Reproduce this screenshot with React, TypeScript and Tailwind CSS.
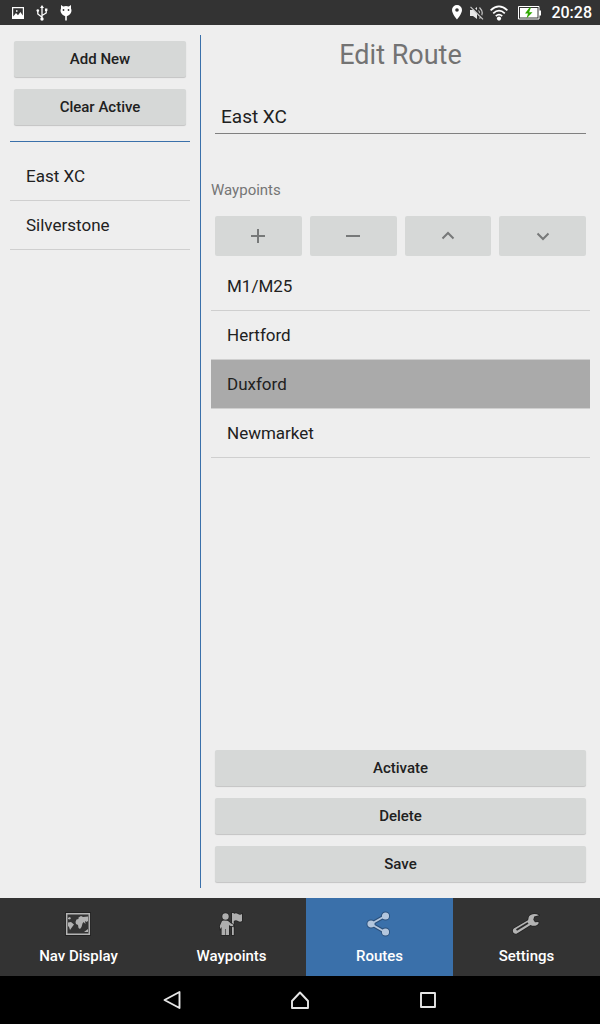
import { useState } from "react";
import type { ReactNode } from "react";

const routes = ["East XC", "Silverstone"];
const waypoints = ["M1/M25", "Hertford", "Duxford", "Newmarket"];

function StatusBar() {
  return (
    <header className="flex h-[25px] items-center justify-between bg-[#333333] pl-3 pr-2 text-white">
      <div className="flex items-center gap-3">
        <svg width="12" height="12" viewBox="0 0 12 12" aria-label="Picture saved">
          <path fillRule="evenodd" fill="currentColor" d="M0 0h12v12H0zM1.2 1.2v8.3L4 6l2 2.2L8.4 5l2.4 3.4V1.2zM4 3.2h1.5v1.5H4z" />
        </svg>
        <svg width="12" height="16" viewBox="0 0 12 16" fill="none" stroke="currentColor" strokeWidth="1.3" aria-label="USB connected">
          <path d="M6 2v12M6 12.2 1.8 9V6M6 10.5 10.2 8V5" />
          <path fill="currentColor" stroke="none" d="M6 0l2 3H4zM9 3.5h2.4v2.4H9z" />
          <circle cx="1.8" cy="5.6" r="1.3" fill="currentColor" stroke="none" />
          <circle cx="6" cy="14" r="1.7" fill="currentColor" stroke="none" />
        </svg>
        <svg width="12" height="16" viewBox="0 0 12 16" aria-label="Debugging">
          <path fill="currentColor" d="M1 0l2.200 1.600Q6 .6 8.800 1.600L11 0v3.500C11.800 5 11.600 7 10.500 8.600 9.500 10.200 8 11 6.800 11.200V15.500H5.200V11.200C4 11 2.500 10.200 1.500 8.600 .4 7 .2 5 1 3.500z" />
          <circle cx="3.500" cy="5" r=".9" fill="#333" />
          <circle cx="8.500" cy="5" r=".9" fill="#333" />
        </svg>
      </div>
      <div className="flex items-center">
        <svg width="10" height="15" viewBox="0 0 10 15" className="mr-2" aria-label="Location">
          <path fillRule="evenodd" fill="currentColor" d="M5 0a5 5 0 0 0-5 5c0 3.700 5 9.500 5 9.500S10 8.700 10 5a5 5 0 0 0-5-5zm0 3.200a1.800 1.800 0 1 1 0 3.600 1.800 1.800 0 0 1 0-3.600z" />
        </svg>
        <svg width="14" height="14" viewBox="0 0 14 14" className="mr-1.5" fill="none" stroke="#c8c8c8" strokeWidth="1.2" aria-label="Muted">
          <path fill="#e8e8e8" stroke="none" d="M0 4h3L7 1v12L3 10H0z" />
          <path d="M8.500 4.500q2 2.500 0 5M9.500 1.500q5.500 5.500 0 11" />
          <path stroke="#333" strokeWidth="2" d="M1.500 0l12 12.500" />
          <path d="M.5 .8l12.500 12.500" />
        </svg>
        <svg width="18" height="16" viewBox="0 0 18 16" className="mr-2.5" fill="none" stroke="currentColor" strokeWidth="1.7" aria-label="Wi-Fi">
          <path d="M.6 5.300Q9-2.500 17.400 5.300M3.200 8.300Q9 2.800 14.800 8.300M5.800 11.200Q9 8 12.200 11.200" />
          <circle cx="9" cy="13.600" r="2.100" fill="currentColor" stroke="none" />
        </svg>
        <svg width="23" height="14" viewBox="0 0 23 14" className="mr-2.5" aria-label="Battery charging">
          <path fill="none" stroke="currentColor" d="M.5 .5h20.500v12.500H.5z" />
          <path fill="currentColor" d="M2 2h17.500v9.500H2zM21 4.500h2v5h-2z" />
          <path fill="#2fa800" d="M11.500 1.500L7 7.500h3l-1.500 5L14.500 6.300h-3.400L13 1.500z" />
        </svg>
        <time className="text-base leading-[25px] font-medium">20:28</time>
      </div>
    </header>
  );
}

function RaisedButton({ children }: { children: ReactNode }) {
  return (
    <button type="button" className="h-9 w-full rounded-xs bg-[#d6d8d7] text-[15px] font-medium text-[#212121] shadow-[0_1px_1px_rgba(0,0,0,0.18)]">
      {children}
    </button>
  );
}

function ToolButton({ label, path }: { label: string; path: string }) {
  return (
    <button type="button" aria-label={label} className="flex h-10 items-center justify-center rounded-xs bg-[#d6d8d7] text-[#777979]">
      <svg width="24" height="24" viewBox="0 0 24 24" fill="none" stroke="currentColor" strokeWidth="2">
        <path d={path} />
      </svg>
    </button>
  );
}

function ListRow({ label, selected = false, onSelect }: { label: string; selected?: boolean; onSelect?: () => void }) {
  return (
    <li className="border-b border-[#cfcfcf]">
      <button
        type="button"
        onClick={onSelect}
        className={`block h-12 w-full px-4 pt-0.5 text-left text-[17px] text-[#212121] ${selected ? "bg-[#aaaaaa]" : ""}`}
      >
        {label}
      </button>
    </li>
  );
}

const MapIcon = (
  <svg width="26" height="24" viewBox="0 0 26 24">
    <path fill="#222" d="M0 0h26v24H0z" />
    <path fill="#343434" d="M2 2h22v20H2z" />
    <path fill="none" stroke="#b3b3b3" strokeWidth="1.500" d="M1.700 1.700h22.600v20.600H1.700z" />
    <path fill="#b3b3b3" d="M3 6l1.500-1L6 6l-1 1.500L3 7zM3 10.500l3-.5 3 2.500-1.500 2L5 18l-1-3-1-1zM10.500 10l1-2.500 2-.5V5.500L16 4l2 1 5-.5V9l-1.500 1-1.500-1 .5 3-2-2-1 1.500L16.500 15l-1.500 2-1.500-1-.5-3-2-1zM23 17v3h-4l2-1.500z" />
  </svg>
);

const PersonIcon = (
  <svg width="24" height="24" viewBox="0 0 24 24" fill="#aeaeae" stroke="#232323" strokeWidth="1.5" paintOrder="stroke">
    <path d="M13 1h1.800v22H13zM14.800 2Q17 .5 19 2T23 2v7q-2 1.300-4 0t-4.200 0z" />
    <path d="M3 9q3-1.500 6 0l3 2.500 2 1v1.800l-2.500-.3L10 13v10H6.800v-6h-.6v6H2.600v-8L1.300 17 .8 14z" />
    <circle cx="6.500" cy="4.500" r="3.200" />
  </svg>
);

const ShareIcon = (
  <svg width="26" height="26" viewBox="0 0 26 26">
    <g fill="#2b507b" stroke="#2b507b" strokeWidth="4">
      <path d="M5 13L19 5M5 13l14 8" />
      <circle cx="5" cy="13" r="2.500" />
      <circle cx="19.500" cy="5" r="2.500" />
      <circle cx="19.500" cy="21" r="2.500" />
    </g>
    <g fill="#b3c6dd" stroke="#b3c6dd" strokeWidth="1.800">
      <path d="M5 13L19 5M5 13l14 8" />
      <circle cx="5" cy="13" r="2.700" />
      <circle cx="19.500" cy="5" r="2.700" />
      <circle cx="19.500" cy="21" r="2.700" />
    </g>
  </svg>
);

const WrenchIcon = (
  <svg width="28" height="22" viewBox="0 0 28 22" fill="none">
    <path
      fill="#b3b3b3"
      stroke="#232323"
      strokeWidth="1.500"
      paintOrder="stroke"
      d="M27 2.200C23.500 .2 18.500 .8 17 3.500c-.7 1.500-.4 2.500-1 3.700L1.800 15.500c-1.800 1.500-1 5 1.800 5.300 1 0 1.700-.5 2.500-1L18.500 12c3 1.500 6.500 1 8-1.500V9l-3.500 .3-1.700-2.500 .9-3.300z"
    />
    <path stroke="#2a2a2a" strokeWidth="2" d="M4.500 17L16 10" />
  </svg>
);

const tabs: { name: string; icon: ReactNode }[] = [
  { name: "Nav Display", icon: MapIcon },
  { name: "Waypoints", icon: PersonIcon },
  { name: "Routes", icon: ShareIcon },
  { name: "Settings", icon: WrenchIcon },
];

function SystemKey({ label, path }: { label: string; path: string }) {
  return (
    <button type="button" aria-label={label} className="flex w-32 items-center justify-center text-[#e6e6e6]">
      <svg width="20" height="20" viewBox="0 0 20 20" fill="none" stroke="currentColor" strokeWidth="1.900" strokeLinejoin="round">
        <path d={path} />
      </svg>
    </button>
  );
}

export default function App() {
  const [selected, setSelected] = useState("Duxford");
  const [name, setName] = useState("East XC");

  return (
    <div className="flex min-h-screen flex-col bg-[#eeeeee] font-['Roboto',sans-serif]">
      <StatusBar />
      <div className="flex grow py-2.5">
        <aside className="w-1/3 px-2.5">
          <div className="flex flex-col gap-3 border-b border-[#3a70aa] px-1 pt-1.5 pb-4">
            <RaisedButton>Add New</RaisedButton>
            <RaisedButton>Clear Active</RaisedButton>
          </div>
          <ul className="pt-2.5">
            {routes.map((route) => (
              <ListRow key={route} label={route} onSelect={() => setName(route)} />
            ))}
          </ul>
        </aside>
        <main className="flex grow flex-col border-l border-[#3a70aa] px-2.5">
          <h1 className="text-center text-[27px] leading-10 text-[#737373]">Edit Route</h1>
          <div className="px-1 pt-6">
            <input
              aria-label="Route name"
              value={name}
              onChange={(e) => setName(e.target.value)}
              className="block h-[35px] w-full border-b border-[#808080] bg-transparent px-1.5 text-[19px] text-[#212121] outline-none"
            />
          </div>
          <h2 className="pt-[46px] text-[15px] leading-5 text-[#757575]">Waypoints</h2>
          <div className="grid grid-cols-4 gap-2 px-1 pt-4 pb-1.5">
            <ToolButton label="Add waypoint" path="M5 12h14M12 5v14" />
            <ToolButton label="Remove waypoint" path="M5 12h14" />
            <ToolButton label="Move up" path="M6.500 14.500L12 9l5.500 5.500" />
            <ToolButton label="Move down" path="M6.500 9.500L12 15l5.500-5.500" />
          </div>
          <ul className="grow">
            {waypoints.map((point) => (
              <ListRow key={point} label={point} selected={point === selected} onSelect={() => setSelected(point)} />
            ))}
          </ul>
          <div className="flex flex-col gap-3 px-1 pt-3 pb-1.5">
            <RaisedButton>Activate</RaisedButton>
            <RaisedButton>Delete</RaisedButton>
            <RaisedButton>Save</RaisedButton>
          </div>
        </main>
      </div>
      <nav className="grid h-[78px] grid-cols-[157fr_149fr_147fr_147fr] bg-[#333333]">
        {tabs.map((tab) => (
          <a
            key={tab.name}
            href="#"
            aria-current={tab.name === "Routes" ? "page" : undefined}
            className={`flex flex-col items-center pt-3 text-[15px] leading-5 font-medium text-white ${tab.name === "Routes" ? "bg-[#3a70aa]" : ""}`}
          >
            <span className="flex h-7 items-center pr-0.5">{tab.icon}</span>
            <span className="pt-2">{tab.name}</span>
          </a>
        ))}
      </nav>
      <footer className="flex h-12 justify-center bg-black">
        <SystemKey label="Back" path="M17.500 2v16L2.500 10z" />
        <SystemKey label="Home" path="M10 2.500L2 11v7h16v-7z" />
        <SystemKey label="Recent apps" path="M3 3h14v14H3z" />
      </footer>
    </div>
  );
}
